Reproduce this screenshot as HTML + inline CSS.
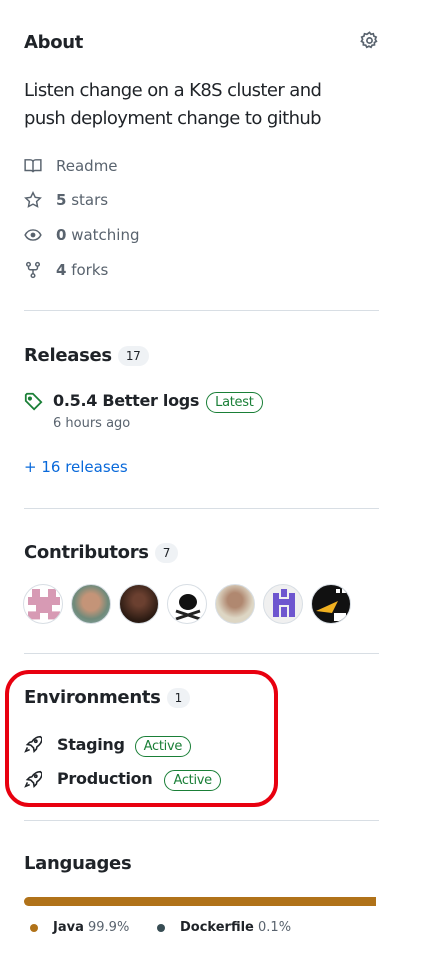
<!DOCTYPE html>
<html><head><meta charset="utf-8"><style>
*{margin:0;padding:0;box-sizing:border-box}
body{width:429px;height:976px;background:#fff;font-family:"DejaVu Sans","Liberation Sans",sans-serif;color:#1f2328;position:relative;overflow:hidden}
.a{position:absolute;white-space:nowrap}
h2{position:absolute;font-size:18px;font-weight:bold;left:24px;letter-spacing:-0.3px}
.hr{position:absolute;left:24px;width:355px;height:1px;background:#d8dee4}
.row{position:absolute;left:24px;font-size:15px;color:#59636e;display:flex;align-items:center;gap:14px}
.row b{color:#59636e}
.cnt{display:inline-block;background:#eff2f5;border-radius:11px;font-size:12px;font-weight:normal;padding:3px 8px;margin-left:6px;vertical-align:middle;color:#1f2328}
.pill{display:inline-block;border:1px solid #1a7f37;color:#1a7f37;border-radius:12px;font-size:13px;padding:2px 8px;font-weight:normal}
.av{position:absolute;top:584px;width:40px;height:40px;border-radius:50%;border:1px solid #d8dee4;overflow:hidden}
svg{display:block}
</style></head><body>
<h2 style="top:32px">About</h2>
<svg class="a" style="left:360px;top:31px" width="19" height="19" viewBox="0 0 16 16" fill="none" stroke="#59636e" stroke-width="1.4"><circle cx="8" cy="8" r="2.2"/><path d="M8 1.2l1.2 1.6 2-.5.5 2 1.9.8-.8 1.9 1 1.7-1.7 1 .1 2-2 .2-.9 1.8-1.8-.9-1.8.9-.9-1.8-2-.2.1-2-1.7-1 1-1.7-.8-1.9 1.9-.8.5-2 2 .5z"/></svg>
<div class="a" style="left:24px;top:77px;font-size:18px;line-height:28px;letter-spacing:-0.6px">Listen change on a K8S cluster and<br>push deployment change to github</div>
<div class="row" style="top:157px"><svg width="18" height="18" viewBox="0 0 16 16" fill="none" stroke="#59636e" stroke-width="1.3"><path d="M1 2.5h4.5c1.4 0 2.5.9 2.5 2v9c0-.8-.8-1.5-2-1.5H1zM15 2.5h-4.5c-1.4 0-2.5.9-2.5 2v9c0-.8.8-1.5 2-1.5H15z"/></svg><span>Readme</span></div>
<div class="row" style="top:191px"><svg width="18" height="18" viewBox="0 0 16 16" fill="none" stroke="#59636e" stroke-width="1.3"><path d="M8 1.5l2 4.1 4.5.6-3.3 3.1.8 4.5L8 11.7l-4 2.1.8-4.5L1.5 6.2 6 5.6z"/></svg><span><b>5</b> stars</span></div>
<div class="row" style="top:226px"><svg width="18" height="18" viewBox="0 0 16 16" fill="none" stroke="#59636e" stroke-width="1.3"><path d="M1 8c1.5-3 4-4.5 7-4.5S13.5 5 15 8c-1.5 3-4 4.5-7 4.5S2.5 11 1 8z"/><circle cx="8" cy="8" r="1.5" fill="#59636e"/></svg><span><b>0</b> watching</span></div>
<div class="row" style="top:261px"><svg width="18" height="18" viewBox="0 0 16 16" fill="none" stroke="#59636e" stroke-width="1.3"><circle cx="4" cy="3" r="1.6"/><circle cx="12" cy="3" r="1.6"/><circle cx="8" cy="13" r="1.6"/><path d="M4 4.6v1.4c0 1 .8 1.8 1.8 1.8h4.4c1 0 1.8-.8 1.8-1.8V4.6M8 7.8v3.6"/></svg><span><b>4</b> forks</span></div>
<div class="hr" style="top:310px"></div>
<h2 style="top:345px">Releases<span class="cnt">17</span></h2>
<svg class="a" style="left:24px;top:392px" width="19" height="19" viewBox="0 0 16 16" fill="none" stroke="#1a7f37" stroke-width="1.5"><path d="M1.5 2.5v5l7 7 6-6-7-7h-5z"/><circle cx="5" cy="5.5" r="1" fill="#1a7f37"/></svg>
<div class="a" style="left:53px;top:391px;font-size:16px;font-weight:bold;letter-spacing:-0.3px">0.5.4 Better logs<span class="pill" style="margin-left:7px">Latest</span></div>
<div class="a" style="left:53px;top:416px;font-size:13px;color:#59636e">6 hours ago</div>
<div class="a" style="left:24px;top:458px;font-size:15px;color:#0969da">+ 16 releases</div>
<div class="hr" style="top:508px"></div>
<h2 style="top:542px">Contributors<span class="cnt">7</span></h2>
<div class="av" style="left:23px;background:#fff"><svg width="40" height="40" viewBox="0 0 5 5"><g fill="#d79ab4"><rect x="1" y="0.5" width="1" height="1"/><rect x="3" y="0.5" width="1" height="1"/><rect x="0.5" y="1.5" width="4" height="1"/><rect x="1.5" y="2.5" width="2" height="1"/><rect x="0.5" y="3.3" width="1.5" height="1"/><rect x="3" y="3.3" width="1.5" height="1"/></g></svg></div>
<div class="av" style="left:71px;background:radial-gradient(circle at 50% 45%,#c49478 30%,#6f8a7a 60%,#8aa 100%)"></div>
<div class="av" style="left:119px;background:radial-gradient(circle at 50% 40%,#6b4030 20%,#2a1a12 70%)"></div>
<div class="av" style="left:167px;background:#fff"><svg width="40" height="40"><ellipse cx="20" cy="17" rx="9" ry="8" fill="#111"/><path d="M8 26l24 8M32 26L8 34" stroke="#222" stroke-width="3"/></svg></div>
<div class="av" style="left:215px;background:radial-gradient(circle at 50% 40%,#b08870 25%,#ddd6c4 60%)"></div>
<div class="av" style="left:263px;background:#f0f0f0"><svg width="40" height="40"><g fill="#6e56cf"><rect x="9" y="8" width="6" height="24"/><rect x="25" y="8" width="6" height="24"/><rect x="9" y="14" width="22" height="6"/><rect x="17" y="4" width="6" height="8"/></g><rect x="17" y="22" width="6" height="10" fill="#6e56cf"/></svg></div>
<div class="av" style="left:311px;background:#111"><svg width="40" height="40"><path d="M4 26l22-10-6 12z" fill="#f0b020"/><rect x="22" y="28" width="12" height="8" fill="#fff"/><rect x="24" y="4" width="4" height="4" fill="#fff"/><rect x="30" y="4" width="4" height="4" fill="#fff"/></svg></div>
<div class="hr" style="top:653px"></div>
<div class="a" style="left:5px;top:670px;width:273px;height:137px;border:4px solid #e8000f;border-radius:24px"></div>
<h2 style="top:687px">Environments<span class="cnt">1</span></h2>
<svg class="a" style="left:24px;top:735px" width="18" height="18" viewBox="0 0 16 16" fill="none" stroke="#1f2328" stroke-width="1.4"><path d="M14.5 1.5c-3 0-5.5 1.5-7.5 4.5l-2 .5-2 2 3 .5 2.5 2.5.5 3 2-2 .5-2c3-2 4.5-4.5 4.5-7.5z"/><circle cx="10.5" cy="5.5" r="1"/><path d="M3 11l-1.5 3.5L5 13"/></svg>
<div class="a" style="left:57px;top:735px;font-size:16px;font-weight:bold;letter-spacing:-0.3px">Staging<span class="pill" style="margin-left:10px">Active</span></div>
<svg class="a" style="left:24px;top:770px" width="18" height="18" viewBox="0 0 16 16" fill="none" stroke="#1f2328" stroke-width="1.4"><path d="M14.5 1.5c-3 0-5.5 1.5-7.5 4.5l-2 .5-2 2 3 .5 2.5 2.5.5 3 2-2 .5-2c3-2 4.5-4.5 4.5-7.5z"/><circle cx="10.5" cy="5.5" r="1"/><path d="M3 11l-1.5 3.5L5 13"/></svg>
<div class="a" style="left:57px;top:769px;font-size:16px;font-weight:bold;letter-spacing:-0.3px">Production<span class="pill" style="margin-left:12px">Active</span></div>
<div class="hr" style="top:820px"></div>
<h2 style="top:853px">Languages</h2>
<div class="a" style="left:24px;top:897px;width:352px;height:9px;border-radius:5px 0 0 5px;background:#b07219"></div>
<div class="a" style="left:30px;top:924px;width:8px;height:8px;border-radius:50%;background:#b07219"></div>
<div class="a" style="left:53px;top:920px;font-size:13px"><b>Java</b> <span style="color:#59636e">99.9%</span></div>
<div class="a" style="left:157px;top:924px;width:8px;height:8px;border-radius:50%;background:#384d54"></div>
<div class="a" style="left:180px;top:920px;font-size:13px"><b>Dockerfile</b> <span style="color:#59636e">0.1%</span></div>
</body></html>
